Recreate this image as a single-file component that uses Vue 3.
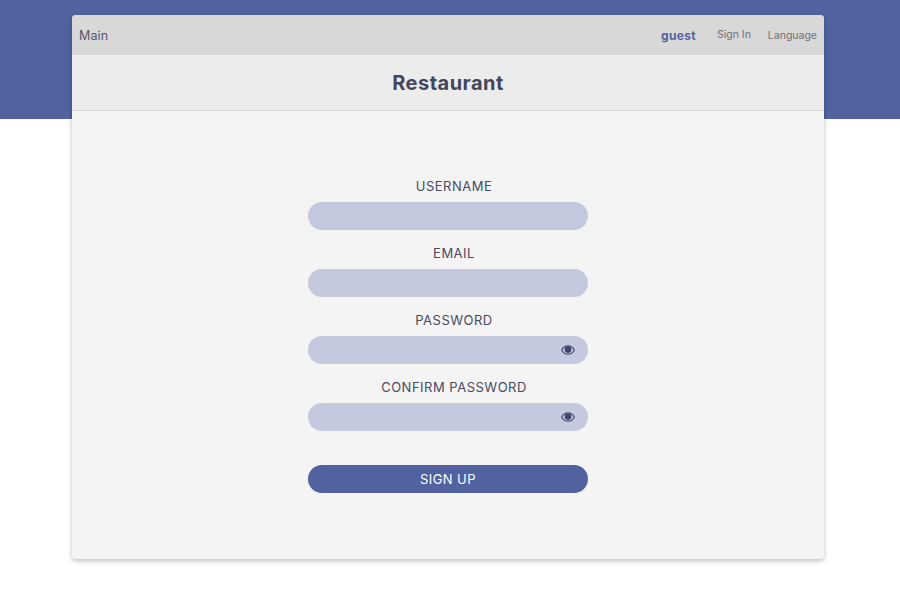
<script setup>
const fields = [
  { label: 'USERNAME', eye: false },
  { label: 'EMAIL', eye: false },
  { label: 'PASSWORD', eye: true },
  { label: 'CONFIRM PASSWORD', eye: true },
]
</script>

<template>
  <div class="page">
    <main class="card">
      <nav class="nav">
        <a class="main-link">Main</a>
        <div class="nav-right">
          <b class="guest">guest</b>
          <a class="signin">Sign In</a>
          <a class="lang">Language</a>
        </div>
      </nav>
      <header class="head"><h1>Restaurant</h1></header>
      <form class="form" @submit.prevent>
        <div v-for="f in fields" :key="f.label" class="field">
          <label>{{ f.label }}</label>
          <div class="input">
            <svg v-if="f.eye" class="eye" viewBox="0 0 14 10" width="14" height="10">
              <path d="M.6 5C2.2 2.2 4.4.8 7 .8s4.800 1.400 6.400 4.200C11.800 7.800 9.600 9.200 7 9.200S2.200 7.800.6 5z" fill="none" stroke="#4a4f6e" stroke-width="1.200"/>
              <circle cx="7" cy="4.600" r="3.300" fill="#3f4468"/>
            </svg>
          </div>
        </div>
        <button class="submit">SIGN UP</button>
      </form>
    </main>
  </div>
</template>

<style>
body { margin: 0; }
</style>

<style scoped>
.page {
  width: 900px;
  height: 600px;
  box-sizing: border-box;
  padding: 15px 76px 0 72px;
  overflow: hidden;
  background: linear-gradient(#5262a0 119px, #ffffff 119px);
  font-family: Inter, "Liberation Sans", sans-serif;
  color: #4a4a5e;
}
.card {
  width: 752px;
  height: 544px;
  background: #f4f4f4;
  border-radius: 4px;
  overflow: hidden;
  box-shadow: 0 2px 5px rgba(0, 0, 0, 0.25);
}
.nav {
  height: 40px;
  background: #d8d8d8;
  display: flex;
  align-items: center;
  justify-content: space-between;
  padding: 0 7px;
}
.main-link { font-size: 12.5px; letter-spacing: 0.1px; color: #55566a; }
.nav-right { display: flex; align-items: center; }
.guest { font-size: 12px; color: #5262a0; font-weight: 700; letter-spacing: 0.3px; }
.signin { font-size: 10.5px; margin-left: 21px; color: #6e6e78; margin-top: -1px; letter-spacing: 0; }
.lang { font-size: 10.5px; margin-left: 17px; color: #6e6e78; letter-spacing: 0; }
.head {
  height: 55px;
  background: #ececec;
  border-bottom: 1px solid #d6d6d6;
  display: flex;
  align-items: center;
  justify-content: center;
}
h1 { margin: 0; font-size: 20px; font-weight: 700; color: #44465c; letter-spacing: 0.5px; }
.form {
  display: flex;
  flex-direction: column;
  align-items: center;
  padding-top: 67px;
}
.field {
  width: 280px;
  height: 67px;
  display: flex;
  flex-direction: column;
  align-items: center;
}
label {
  height: 24px;
  line-height: 17px;
  font-size: 13px;
  letter-spacing: 0.5px;
  margin-left: 12px;
}
.input {
  width: 100%;
  height: 28px;
  border-radius: 14px;
  background: #c5c9dd;
  display: flex;
  align-items: center;
  justify-content: flex-end;
  padding-right: 13px;
  box-sizing: border-box;
}
.submit {
  width: 280px;
  height: 28px;
  margin-top: 19px;
  border: 0;
  border-radius: 14px;
  background: #5262a0;
  color: #fff;
  font: 13px Inter, "Liberation Sans", sans-serif;
  letter-spacing: 0.4px;
  padding: 0;
}
</style>
